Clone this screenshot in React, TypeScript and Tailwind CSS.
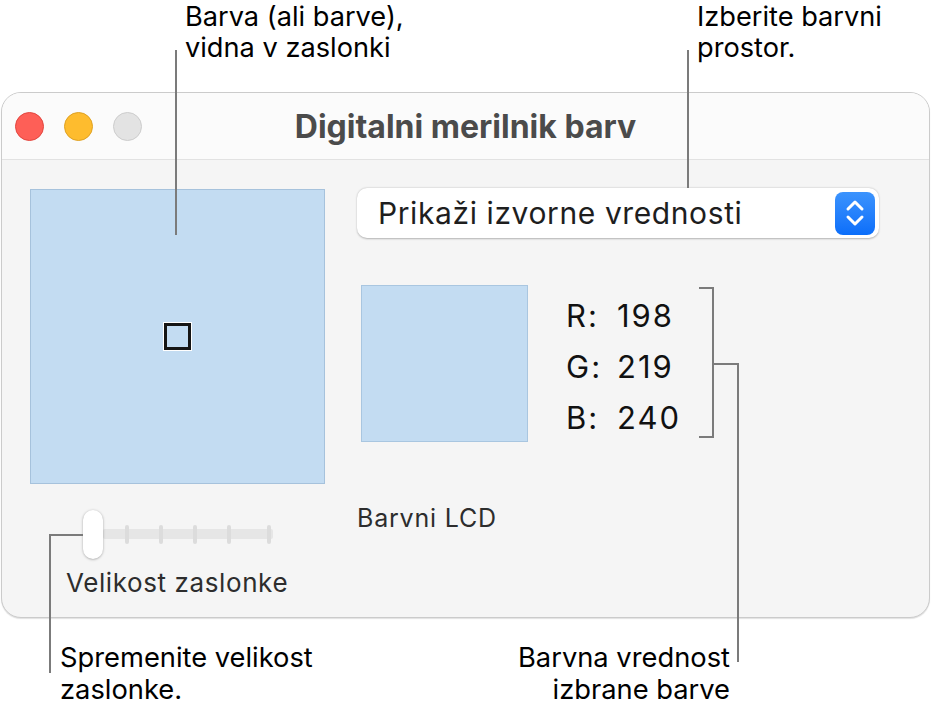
import React from 'react';

const ticks = [127, 161, 195, 229, 269];

const TrafficLights: React.FC = () => (
    <div className="flex items-center gap-[20px] pl-[13px]">
        <span className="block w-[29px] h-[29px] rounded-full bg-[#fe5f57] border border-[#e2463f]" />
        <span className="block w-[29px] h-[29px] rounded-full bg-[#febc2e] border border-[#dea123]" />
        <span className="block w-[29px] h-[29px] rounded-full bg-[#e3e3e3] border border-[#cccccc]" />
    </div>
);

const PopupButton: React.FC = () => (
    <div className="flex items-center justify-between w-[522px] h-[50px] bg-white rounded-[10px] shadow-[0_0.5px_2px_rgba(0,0,0,0.28)] pl-[21px] pr-[4px]">
        <span className="text-[30px] text-[#1e1e1e] tracking-[0.6px]">Prikaži izvorne vrednosti</span>
        <span className="flex items-center justify-center w-[40px] h-[43px] rounded-[8px] bg-gradient-to-b from-[#3b93fd] to-[#0a6efa]">
            <svg width="22" height="30" viewBox="0 0 22 30" fill="none" stroke="white" strokeWidth="3" strokeLinecap="round" strokeLinejoin="round">
                <path d="M4 11 L11 4 L18 11" />
                <path d="M4 19 L11 26 L18 19" />
            </svg>
        </span>
    </div>
);

const ApertureSlider: React.FC = () => (
    <div className="relative w-[250px] h-[49px]">
        <div className="absolute left-[73px] top-[19px] w-[170px] h-[10px] bg-[#e6e6e6] rounded-[2px]" />
        {ticks.map(x => (
            <div key={x} className="absolute top-[15px] w-[4px] h-[19px] rounded-[2px] bg-[#dcdcdc]" style={{ left: x - 32 }} />
        ))}
        <div className="absolute left-[53px] top-0 w-[20px] h-[49px] rounded-full bg-white shadow-[0_0.5px_2.5px_rgba(0,0,0,0.35)]" />
    </div>
);

const App: React.FC = () => {
    const values = [
        { label: 'R:', value: '198' },
        { label: 'G:', value: '219' },
        { label: 'B:', value: '240' },
    ];

    return (
        <div className="relative w-[931px] h-[718px] bg-white overflow-hidden text-black font-['Inter','Liberation_Sans',sans-serif]">
            {/* top annotations */}
            <div className="flex h-[92px] text-[27.2px] leading-[31px]">
                <div className="ml-[185px] w-[512px] pt-[1px]">
                    Barva (ali barve),<br />vidna v zaslonki
                </div>
                <div className="pt-[1px]">
                    Izberite barvni<br />prostor.
                </div>
            </div>

            {/* window */}
            <div className="ml-[1px] w-[929px] h-[526px] rounded-[20px] border border-[#cbcbcb] bg-[#f5f5f5] shadow-[0_1px_1px_rgba(0,0,0,0.12)] overflow-hidden">
                <div className="relative flex items-center h-[67px] bg-[#fbfbfb] border-b border-[#e2e2e2]">
                    <TrafficLights />
                    <div className="absolute inset-0 flex items-center justify-center text-[32px] font-bold text-[#4b4b4b] pt-[1px]">
                        Digitalni merilnik barv
                    </div>
                </div>

                <div className="flex pl-[28px] pt-[29px]">
                    <div className="flex flex-col w-[295px]">
                        <div className="flex items-center justify-center w-[295px] h-[295px] bg-[#c3dcf2] border border-[#a6c2dc]">
                            <div className="w-[29px] h-[29px] border-[1.5px] border-white">
                                <div className="w-full h-full border-[3px] border-[#151515]" />
                            </div>
                        </div>
                        <div className="mt-[26px]">
                            <ApertureSlider />
                        </div>
                        <div className="ml-[36px] mt-[4px] text-[26px] tracking-[0.6px] text-[#2d2d2d]">Velikost zaslonke</div>
                    </div>

                    <div className="flex flex-col ml-[32px] -mt-[1px]">
                        <PopupButton />
                        <div className="flex mt-[47px] ml-[4px]">
                            <div className="w-[167px] h-[157px] bg-[#c3dcf2] border border-[#a9c6e0]" />
                            <div className="ml-[38px] mt-[6px] flex flex-col text-[31px] tracking-[2px] text-[#111]">
                                {values.map(v => (
                                    <div key={v.label} className="flex items-center h-[51px]">
                                        <span className="w-[51px]">{v.label}</span>
                                        <span>{v.value}</span>
                                    </div>
                                ))}
                            </div>
                        </div>
                        <div className="mt-[56px] text-[25px] tracking-[0.8px] text-[#2d2d2d]">Barvni LCD</div>
                    </div>
                </div>
            </div>

            {/* bottom annotations */}
            <div className="flex mt-[24px] text-[27.3px] leading-[32px]">
                <div className="ml-[60px]">
                    Spremenite velikost<br />zaslonke.
                </div>
                <div className="ml-auto mr-[201px] text-right">
                    Barvna vrednost<br />izbrane barve
                </div>
            </div>

            {/* callout lines */}
            <svg className="absolute inset-0 pointer-events-none" width="931" height="718" fill="none" stroke="#7b7b7b" strokeWidth="2">
                <path d="M176 50 V235" />
                <path d="M688 50 V188" />
                <path d="M699 288 H713 V437 H699" />
                <path d="M713 364 H738 V662" />
                <path d="M83 535 H50 V673" />
            </svg>
        </div>
    );
};

export default App;
